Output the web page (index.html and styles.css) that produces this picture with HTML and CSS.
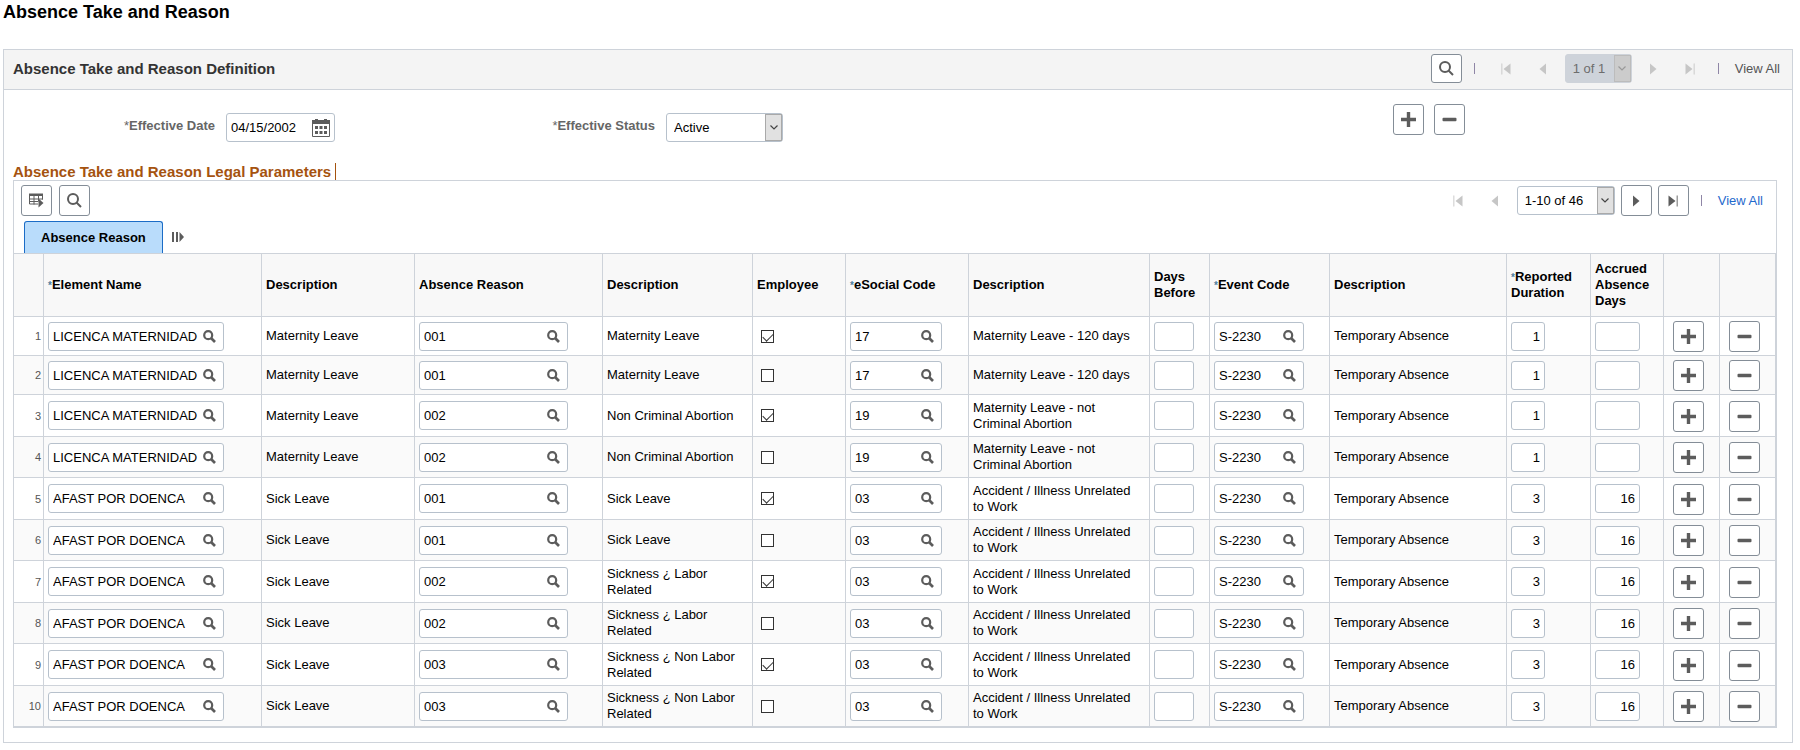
FILE: index.html
```html
<!DOCTYPE html>
<html lang="en">

<head>
    <meta charset="UTF-8">
    <meta name="viewport" content="width=device-width, initial-scale=1.0">
    <title>Absence Take and Reason</title>
    <link rel="stylesheet" href="styles.css">
</head>

<body>
    <!-- Shared icons -->
    <svg class="sprite" aria-hidden="true">
        <symbol id="i-search" viewBox="0 0 15 15"><circle cx="6" cy="6" r="5" fill="none" stroke="currentColor" stroke-width="2"/><path d="M9.5 9.5L14 14" stroke="currentColor" stroke-width="2"/></symbol>
        <symbol id="i-lookup" viewBox="0 0 13 13"><circle cx="5.2" cy="5.2" r="4" fill="none" stroke="currentColor" stroke-width="2.2"/><path d="M8 8L12 12" stroke="currentColor" stroke-width="2.6"/></symbol>
        <symbol id="i-plus" viewBox="0 0 15 15"><path d="M1.5 7.5H13.5M7.5 1.5V13.5" stroke="currentColor" stroke-width="3.4" stroke-linecap="square" fill="none"/></symbol>
        <symbol id="i-minus" viewBox="0 0 15 15"><rect x="0.5" y="5.8" width="14" height="3.4" rx="1" fill="currentColor"/></symbol>
        <symbol id="i-first" viewBox="0 0 10 12"><path d="M0 0.5H1.5V11.5H0Z" fill="currentColor" opacity="0.6"/><path d="M9.5 0.5V11.5L2.5 6Z" fill="currentColor"/></symbol>
        <symbol id="i-prev" viewBox="0 0 10 12"><path d="M8 0.5V11.5L1.5 6Z" fill="currentColor"/></symbol>
        <symbol id="i-next" viewBox="0 0 10 12"><path d="M2 0.5V11.5L8.5 6Z" fill="currentColor"/></symbol>
        <symbol id="i-last" viewBox="0 0 10 12"><path d="M0.5 0.5V11.5L7.5 6Z" fill="currentColor"/><path d="M8.5 0.5H10V11.5H8.5Z" fill="currentColor" opacity="0.6"/></symbol>
        <symbol id="i-down" viewBox="0 0 8 5"><path d="M0.5 0.5L4 4L7.5 0.5" fill="none" stroke="currentColor" stroke-width="1.2"/></symbol>
        <symbol id="i-calendar" viewBox="0 0 18 18"><path d="M0 1H18V5H0ZM3 0H6V2H3ZM12 0H15V2H12Z" fill="currentColor"/><path d="M0.5 5V17.5H17.5V5" fill="none" stroke="currentColor"/><path d="M3 7H6V10H3ZM7.5 7H10.5V10H7.5ZM12 7H15V10H12ZM3 12H6V15H3ZM7.5 12H10.5V15H7.5ZM12 12H15V15H12Z" fill="currentColor"/></symbol>
        <symbol id="i-grid" viewBox="0 0 15 14"><path d="M0 0H14V2.5H0Z" fill="currentColor"/><path d="M0.5 2V10.5H9M0 5.5H14M0 8H9M5 2V11M9.5 2V8M13.5 2V6" fill="none" stroke="currentColor"/><path d="M9.5 5V14L14.5 9.5Z" fill="currentColor"/></symbol>
        <symbol id="i-columns" viewBox="0 0 12 10"><path d="M0 0H2V10H0ZM4 0H6V10H4ZM7.5 0L12 5L7.5 10Z" fill="currentColor"/></symbol>
    </svg>

    <h1>Absence Take and Reason</h1>

    <section class="group">
        <div class="group-header">
            <h2>Absence Take and Reason Definition</h2>
            <div class="pager">
                <button class="btn btn-find" aria-label="Find"><svg class="icon-15"><use href="#i-search"/></svg></button>
                <span class="sep"></span>
                <button class="nav" disabled aria-label="First"><svg class="icon-nav"><use href="#i-first"/></svg></button>
                <button class="nav" disabled aria-label="Previous"><svg class="icon-nav"><use href="#i-prev"/></svg></button>
                <span class="select select-page">
                    <select disabled aria-label="Row"><option>1 of 1</option></select>
                    <span class="arrow"><svg><use href="#i-down"/></svg></span>
                </span>
                <button class="nav" disabled aria-label="Next"><svg class="icon-nav"><use href="#i-next"/></svg></button>
                <button class="nav" disabled aria-label="Last"><svg class="icon-nav"><use href="#i-last"/></svg></button>
                <span class="sep"></span>
                <span class="view-all">View All</span>
            </div>
        </div>

        <div class="form-row">
            <label class="form-label" for="effDate"><span class="req">*</span>Effective Date</label>
            <span class="field field-date">
                <input type="text" id="effDate" value="04/15/2002">
                <button class="field-btn" aria-label="Choose a date"><svg class="icon-18"><use href="#i-calendar"/></svg></button>
            </span>
            <label class="form-label label-status" for="effStatus"><span class="req">*</span>Effective Status</label>
            <span class="select select-status">
                <select id="effStatus">
                    <option>Active</option>
                    <option>Inactive</option>
                </select>
                <span class="arrow"><svg><use href="#i-down"/></svg></span>
            </span>
            <div class="row-actions">
                <button class="btn" aria-label="Add a new row"><svg class="icon-15"><use href="#i-plus"/></svg></button>
                <button class="btn" aria-label="Delete row"><svg class="icon-15"><use href="#i-minus"/></svg></button>
            </div>
        </div>

        <h3>Absence Take and Reason Legal Parameters</h3>

        <div class="grid">
            <div class="toolbar">
                <div class="tools">
                    <button class="btn" aria-label="Grid actions"><svg class="icon-15"><use href="#i-grid"/></svg></button>
                    <button class="btn" aria-label="Find in grid"><svg class="icon-15"><use href="#i-search"/></svg></button>
                </div>
                <div class="pager">
                    <button class="nav" disabled aria-label="First rows"><svg class="icon-nav"><use href="#i-first"/></svg></button>
                    <button class="nav" disabled aria-label="Previous rows"><svg class="icon-nav"><use href="#i-prev"/></svg></button>
                    <span class="select select-rows">
                        <select aria-label="Rows"><option>1-10 of 46</option></select>
                        <span class="arrow"><svg><use href="#i-down"/></svg></span>
                    </span>
                    <button class="btn" aria-label="Next rows"><svg class="icon-nav"><use href="#i-next"/></svg></button>
                    <button class="btn" aria-label="Last rows"><svg class="icon-nav"><use href="#i-last"/></svg></button>
                    <span class="sep"></span>
                    <a class="view-all" href="#">View All</a>
                </div>
            </div>

            <div class="tabs">
                <button class="tab">Absence Reason</button>
                <button class="show-all" aria-label="Show all columns"><svg class="icon-columns"><use href="#i-columns"/></svg></button>
            </div>

            <table>
                <colgroup>
                    <col class="c-num">
                    <col class="c-element">
                    <col class="c-desc1">
                    <col class="c-reason">
                    <col class="c-desc2">
                    <col class="c-employee">
                    <col class="c-esocial">
                    <col class="c-desc3">
                    <col class="c-days">
                    <col class="c-event">
                    <col class="c-desc4">
                    <col class="c-reported">
                    <col class="c-accrued">
                    <col class="c-action">
                    <col class="c-action">
                </colgroup>
                <thead>
                    <tr>
                        <th></th>
                        <th><span class="star">*</span>Element Name</th>
                        <th>Description</th>
                        <th>Absence Reason</th>
                        <th>Description</th>
                        <th>Employee</th>
                        <th><span class="star">*</span>eSocial Code</th>
                        <th>Description</th>
                        <th>Days Before</th>
                        <th><span class="star">*</span>Event Code</th>
                        <th>Description</th>
                        <th><span class="star">*</span>Reported Duration</th>
                        <th>Accrued Absence Days</th>
                        <th></th>
                        <th></th>
                    </tr>
                </thead>
                <tbody id="rows"></tbody>
            </table>
        </div>
    </section>

    <script src="rows.js"></script>
</body>

</html>
```
FILE: rows.js
```js
const rows = [
    ['LICENCA MATERNIDAD', 'Maternity Leave', '001', 'Maternity Leave', true, '17', 'Maternity Leave - 120 days', '1', ''],
    ['LICENCA MATERNIDAD', 'Maternity Leave', '001', 'Maternity Leave', false, '17', 'Maternity Leave - 120 days', '1', ''],
    ['LICENCA MATERNIDAD', 'Maternity Leave', '002', 'Non Criminal Abortion', true, '19', 'Maternity Leave - not Criminal Abortion', '1', ''],
    ['LICENCA MATERNIDAD', 'Maternity Leave', '002', 'Non Criminal Abortion', false, '19', 'Maternity Leave - not Criminal Abortion', '1', ''],
    ['AFAST POR DOENCA', 'Sick Leave', '001', 'Sick Leave', true, '03', 'Accident / Illness Unrelated to Work', '3', '16'],
    ['AFAST POR DOENCA', 'Sick Leave', '001', 'Sick Leave', false, '03', 'Accident / Illness Unrelated to Work', '3', '16'],
    ['AFAST POR DOENCA', 'Sick Leave', '002', 'Sickness ¿ Labor Related', true, '03', 'Accident / Illness Unrelated to Work', '3', '16'],
    ['AFAST POR DOENCA', 'Sick Leave', '002', 'Sickness ¿ Labor Related', false, '03', 'Accident / Illness Unrelated to Work', '3', '16'],
    ['AFAST POR DOENCA', 'Sick Leave', '003', 'Sickness ¿ Non Labor Related', true, '03', 'Accident / Illness Unrelated to Work', '3', '16'],
    ['AFAST POR DOENCA', 'Sick Leave', '003', 'Sickness ¿ Non Labor Related', false, '03', 'Accident / Illness Unrelated to Work', '3', '16']
];

// Text box with the lookup button inside
function lookup(cls, label, value) {
    return `<span class="field ${cls}"><input type="text" aria-label="${label}" value="${value}">` +
        `<button class="field-btn" aria-label="Look up ${label}"><svg class="icon-13"><use href="#i-lookup"/></svg></button></span>`;
}

function box(cls, label, value) {
    return `<span class="field ${cls}"><input type="text" aria-label="${label}" value="${value}"></span>`;
}

function action(icon, label) {
    return `<button class="btn" aria-label="${label}"><svg class="icon-15"><use href="#${icon}"/></svg></button>`;
}

document.getElementById('rows').innerHTML = rows.map((r, i) => `
    <tr>
        <td class="num">${i + 1}</td>
        <td>${lookup('field-element', 'Element Name', r[0])}</td>
        <td>${r[1]}</td>
        <td>${lookup('field-reason', 'Absence Reason', r[2])}</td>
        <td>${r[3]}</td>
        <td><input type="checkbox" aria-label="Employee" ${r[4] ? 'checked' : ''}></td>
        <td>${lookup('field-esocial', 'eSocial Code', r[5])}</td>
        <td>${r[6]}</td>
        <td>${box('field-days', 'Days Before', '')}</td>
        <td>${lookup('field-event', 'Event Code', 'S-2230')}</td>
        <td>Temporary Absence</td>
        <td>${box('field-reported', 'Reported Duration', r[7])}</td>
        <td>${box('field-accrued', 'Accrued Absence Days', r[8])}</td>
        <td class="action">${action('i-plus', 'Add row')}</td>
        <td class="action">${action('i-minus', 'Delete row')}</td>
    </tr>`).join('');
```
FILE: styles.css
```css
* {
    box-sizing: border-box;
}

body {
    margin: 0;
    padding: 0 7px 7px 3px;
    background-color: #fff;
    color: #000;
    font-family: "Liberation Sans", Arial, sans-serif;
    font-size: 13px;
    line-height: 16px;
}

input,
select,
button {
    font: inherit;
    color: inherit;
}

button {
    padding: 0;
    border: none;
    background: none;
    cursor: pointer;
}

svg {
    display: block;
}

.sprite {
    position: absolute;
    width: 0;
    height: 0;
}

h1 {
    margin: 0 0 25px;
    font-size: 18px;
    line-height: 24px;
}

h2,
h3 {
    margin: 0;
    font-size: 15px;
    line-height: 17px;
}

h2 {
    color: #333;
}

h3 {
    display: table;
    margin: 21px 0 0 9px;
    padding-right: 4px;
    border-right: 1px solid #a5530f;
    color: #a5530f;
}

.group {
    border: 1px solid #ced3da;
}

.group-header {
    display: flex;
    align-items: center;
    justify-content: space-between;
    height: 40px;
    padding: 0 12px 2px 9px;
    border-bottom: 1px solid #ced3da;
    background-color: #f4f4f4;
}

/* Icons */
.icon-13 {
    width: 13px;
    height: 13px;
}

.icon-15 {
    width: 15px;
    height: 15px;
}

.icon-18 {
    width: 18px;
    height: 18px;
}

.icon-nav {
    width: 10px;
    height: 12px;
}

.icon-columns {
    width: 12px;
    height: 10px;
}

/* Buttons */
.btn,
.nav {
    display: flex;
    align-items: center;
    justify-content: center;
    width: 31px;
    height: 31px;
    color: #5c5c5c;
}

.btn {
    border: 1px solid #848d97;
    border-radius: 3px;
    background-color: #fff;
}

.btn-find {
    height: 29px;
}

.nav:disabled {
    color: #c6c6c6;
    cursor: default;
}

/* Pager */
.pager {
    display: flex;
    align-items: center;
    gap: 6px;
}

.sep {
    width: 1px;
    height: 11px;
    margin: 0 10px 0 6px;
    background-color: #8f86a6;
}

.view-all {
    color: #555;
    text-decoration: none;
}

a.view-all {
    color: #1f69cc;
}

/* Selects */
.select {
    display: block;
    position: relative;
    height: 29px;
}

.select select {
    appearance: none;
    display: block;
    width: 100%;
    height: 100%;
    padding: 0 18px 0 7px;
    border: 1px solid #b7c1cc;
    border-radius: 3px;
    background-color: #fff;
}

.select .arrow {
    position: absolute;
    top: 1px;
    right: 1px;
    bottom: 1px;
    display: flex;
    align-items: center;
    justify-content: center;
    width: 17px;
    border: 1px solid #a9a9a9;
    background-color: #e1e1e1;
    color: #444;
    pointer-events: none;
}

.arrow svg {
    width: 8px;
    height: 5px;
}

.select select:disabled {
    border-color: #ced3da;
    background-color: #ced3da;
    color: #6d6d6d;
    opacity: 1;
}

.select select:disabled + .arrow {
    border-color: #bcbcbc;
    background-color: #cccccc;
    color: #999;
}

.select-page {
    width: 67px;
}

.select-rows {
    width: 98px;
}

.select-status {
    width: 117px;
}

/* Text boxes */
.field {
    display: flex;
    align-items: center;
    height: 29px;
    padding: 0 7px 0 4px;
    border: 1px solid #b7c1cc;
    border-radius: 3px;
    background-color: #fff;
}

.field input {
    flex: 1;
    min-width: 0;
    height: 100%;
    padding: 0;
    border: none;
    outline: none;
    background: none;
}

.field-btn {
    color: #5c5c5c;
}

.field-date {
    width: 109px;
    padding-right: 4px;
}

.field-element {
    width: 176px;
}

.field-reason {
    width: 149px;
}

.field-esocial {
    width: 92px;
}

.field-days {
    width: 40px;
}

.field-event {
    width: 90px;
}

.field-reported {
    width: 34px;
}

.field-accrued {
    width: 45px;
}

.field-days,
.field-reported,
.field-accrued {
    padding-right: 4px;
}

.field-days input,
.field-reported input,
.field-accrued input {
    text-align: right;
}

/* Effective date and status */
.form-row {
    display: flex;
    align-items: flex-start;
    gap: 11px;
    padding: 23px 327px 0 0;
}

.form-label {
    width: 211px;
    padding-top: 5px;
    color: #666;
    font-weight: bold;
    text-align: right;
}

.label-status {
    width: 309px;
}

.req {
    font-weight: normal;
}

.row-actions {
    display: flex;
    gap: 10px;
    margin: -9px 0 0 auto;
}

/* Grid */
.grid {
    margin: 0 15px 14px 9px;
    border: 1px solid #ced3da;
}

.toolbar {
    display: flex;
    align-items: flex-start;
    justify-content: space-between;
    height: 40px;
    padding: 4px 13px 0 7px;
}

.tools {
    display: flex;
    gap: 7px;
}

.tabs {
    display: flex;
    align-items: center;
    gap: 9px;
    padding-left: 10px;
}

.tab {
    height: 32px;
    padding: 0 16px;
    border: 1px solid #1b6cc6;
    border-bottom: none;
    border-radius: 3px 3px 0 0;
    background-color: #b9dcfb;
    font-weight: bold;
}

.show-all {
    color: #5c5c5c;
}

table {
    width: 100%;
    table-layout: fixed;
    border-collapse: separate;
    border-spacing: 0;
}

th,
td {
    padding: 0 4px;
    border-right: 1px solid #ced3da;
    border-bottom: 1px solid #ced3da;
    text-align: left;
}

th {
    height: 64px;
    border-top: 1px solid #ced3da;
    background-color: #f8f8f8;
}

td {
    height: 42px;
    padding-right: 8px;
}

tr:nth-child(even) td {
    height: 41px;
    background-color: #fafafa;
}

tr:nth-child(-n+2) td {
    height: 39px;
}

/* Required marker in the column headings */
.star {
    display: inline-block;
    color: #4f7f9f;
    font-size: 10px;
    line-height: 12px;
    vertical-align: middle;
}

td.num {
    padding-right: 2px;
    color: #555;
    font-size: 11px;
    text-align: right;
}

td.action {
    padding: 1px 4px 0 9px;
}

.c-num { width: 30px; }
.c-element { width: 218px; }
.c-desc1 { width: 153px; }
.c-reason { width: 188px; }
.c-desc2 { width: 150px; }
.c-employee { width: 93px; }
.c-esocial { width: 123px; }
.c-desc3 { width: 181px; }
.c-days { width: 60px; }
.c-event { width: 120px; }
.c-desc4 { width: 177px; }
.c-reported { width: 84px; }
.c-accrued { width: 73px; }
.c-action { width: 56px; }

/* Checkboxes */
input[type="checkbox"] {
    appearance: none;
    display: block;
    width: 13px;
    height: 13px;
    margin: 0 0 0 4px;
    border: 1px solid #333;
    background-color: #fff;
}

input[type="checkbox"]:checked::before {
    content: "";
    display: block;
    width: 9px;
    height: 5px;
    margin: 2px 0 0 1px;
    border: solid #333;
    border-width: 0 0 1px 1px;
    transform: rotate(-45deg);
}
```
